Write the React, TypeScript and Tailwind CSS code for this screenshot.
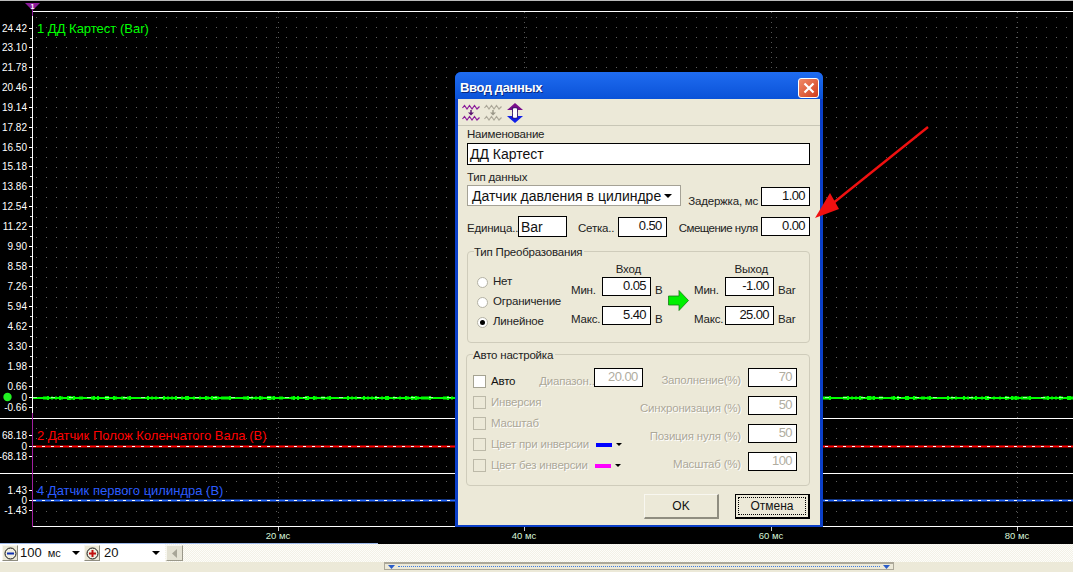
import React from "react";

const FONT = "font-['Liberation_Sans',Arial,sans-serif]";

const axis: [string, number][] = [
  ["24.42", 28], ["23.10", 47], ["21.78", 67], ["20.46", 87], ["19.14", 107], ["17.82", 127], ["16.50", 147],
  ["15.18", 166], ["13.86", 186], ["12.54", 206], ["11.22", 226], ["9.90", 246], ["8.58", 266], ["7.26", 286],
  ["5.94", 306], ["4.62", 326], ["3.30", 346], ["1.98", 366], ["0.66", 386], ["0", 397], ["-0.66", 407],
  ["68.18", 435], ["0", 446], ["-68.18", 456], ["1.43", 490], ["0", 500], ["-1.43", 510],
];

const dotRows: number[] = [
  ...Array.from({ length: 40 }, (_, i) => 17 + i * 10),
  428, 438, 456, 466, 481, 491, 511, 521,
];

function noise() {
  let d = "";
  let s = 7;
  for (let x = 33; x < 1073; x += 2) {
    s = (s * 73 + 41) % 101;
    const h = s % 5 === 0 ? 4 : s % 3 === 0 ? 3 : 2;
    d += `M${x} ${398 - h / 2}h2v${h}h-2z`;
  }
  return d;
}

function Chart() {
  return (
    <svg width="1073" height="544" className="block" fontFamily="Liberation Sans, Arial, sans-serif">
      <rect width="1073" height="544" fill="#000" />
      <line x1="0" y1="0.5" x2="1073" y2="0.5" stroke="#bbb" />
      {dotRows.map((y) => (
        <line key={y} x1="36" y1={y + 0.5} x2="1073" y2={y + 0.5} stroke="#5c5c5c" strokeDasharray="1 9" />
      ))}
      {[278, 524, 771, 1017].map((x) => (
        <React.Fragment key={x}>
          <line x1={x + 0.5} y1="12" x2={x + 0.5} y2="526" stroke="#555" strokeDasharray="1 4" />
          <line x1={x + 0.5} y1="526" x2={x + 0.5} y2="531" stroke="#ccc" />
          <text x={x} y="539" fill="#d8f5d8" fontSize="9.5" textAnchor="middle">
            {(x === 278 ? 20 : x === 524 ? 40 : x === 771 ? 60 : 80) + " мс"}
          </text>
        </React.Fragment>
      ))}
      <line x1="33" y1="11.5" x2="1073" y2="11.5" stroke="#fff" />
      <line x1="0" y1="418.5" x2="1073" y2="418.5" stroke="#fff" />
      <line x1="0" y1="473.5" x2="1073" y2="473.5" stroke="#fff" />
      <line x1="33" y1="526.5" x2="1073" y2="526.5" stroke="#fff" />
      <line x1="0" y1="543.5" x2="378" y2="543.5" stroke="#9db8e8" />
      <line x1="32.5" y1="15" x2="32.5" y2="413" stroke="#fff" />
      <line x1="32.5" y1="413" x2="32.5" y2="527" stroke="#a020a0" />
      {axis.map(([t, y], i) => (
        <React.Fragment key={i}>
          <text x="27" y={y + 3.5} fill="#fff" fontSize="10" textAnchor="end">{t}</text>
          <line x1="29" y1={y + 0.5} x2="32" y2={y + 0.5} stroke="#fff" />
          {i < 18 && <line x1="30" y1={y + 10.5} x2="32" y2={y + 10.5} stroke="#ddd" />}
        </React.Fragment>
      ))}
      <polygon points="25,3 40,3 33,10 32,10" fill="#8a1a9a" />
      <line x1="32.5" y1="9" x2="32.5" y2="16" stroke="#8a1a9a" />
      <text x="32.5" y="9" fill="#fff" fontSize="7" fontWeight="bold" textAnchor="middle">1</text>
      <circle cx="7.5" cy="397" r="4.2" fill="#22f022" />
      <path d={noise()} fill="#00ff00" />
      <line x1="33" y1="397.5" x2="1073" y2="397.5" stroke="#e8ffe8" strokeWidth="0.7" strokeDasharray="4 14" />
      <line x1="33" y1="446.5" x2="1073" y2="446.5" stroke="#ff0000" strokeWidth="2" />
      <line x1="33" y1="446.5" x2="1073" y2="446.5" stroke="#fff" strokeWidth="1" strokeDasharray="3 6" />
      <line x1="33" y1="500.5" x2="1073" y2="500.5" stroke="#2266ff" strokeWidth="2" />
      <line x1="33" y1="500.5" x2="1073" y2="500.5" stroke="#fff" strokeWidth="1" strokeDasharray="3 6" />
      <text x="37" y="33" fill="#00ff00" fontSize="13">1 ДД Картест (Bar)</text>
      <text x="37" y="440" fill="#ff0000" fontSize="13">2 Датчик Полож Коленчатого Вала (В)</text>
      <text x="37" y="494.5" fill="#2a5cff" fontSize="13">4 Датчик первого цилиндра (В)</text>
    </svg>
  );
}

function Field({ value, w = 49, h = 19, disabled = false, left = false, big = false }: { value: string; w?: number; h?: number; disabled?: boolean; left?: boolean; big?: boolean }) {
  return (
    <div
      style={{ width: w, height: h }}
      className={`shrink-0 bg-white border border-black flex items-center leading-none ${left ? "justify-start px-[2px]" : "justify-end px-[4px] pb-[2px]"} ${big ? "text-[14px] tracking-normal" : "text-[13px] tracking-[-0.6px]"} ${disabled ? "text-[#b0ad9f]" : "text-[#111]"}`}
    >
      {value}
    </div>
  );
}

function Dis({ children, className = "" }: { children: React.ReactNode; className?: string }) {
  return <span className={`text-[#aca899] [text-shadow:1px_1px_0_#fff] whitespace-nowrap ${className}`}>{children}</span>;
}

function Radio({ label, on = false }: { label: string; on?: boolean }) {
  return (
    <div className="flex items-center h-[20px]">
      <div className="w-[11px] h-[11px] rounded-full bg-white border border-[#b4b2a4] flex items-center justify-center">
        {on && <div className="w-[5px] h-[5px] rounded-full bg-black" />}
      </div>
      <span className="ml-[5px] whitespace-nowrap">{label}</span>
    </div>
  );
}

function Caret({ cls = "", size = 4 }: { cls?: string; size?: number }) {
  return (
    <svg width={size * 2} height={size} className={`shrink-0 ${cls}`}>
      <polygon points={`0,0 ${size * 2},0 ${size},${size}`} fill="#000" />
    </svg>
  );
}

function Check({ label, on = false, swatch }: { label: string; on?: boolean; swatch?: string }) {
  return (
    <div className="flex items-center h-[21px]">
      <div className={`w-[13px] h-[13px] shrink-0 border ${on ? "bg-white border-[#a5a392]" : "border-[#bcb9a8]"}`} />
      <span className="ml-[5px]">{on ? <span className="text-[#111]">{label}</span> : <Dis>{label}</Dis>}</span>
      {swatch && (
        <>
          <div className={`ml-[7px] w-[16px] h-[4px] shrink-0 ${swatch}`} />
          <Caret cls="ml-[4px]" size={3} />
        </>
      )}
    </div>
  );
}

function Wave({ color, accent }: { color: string; accent: string }) {
  return (
    <svg width="18" height="18" viewBox="0 0 18 18" fill="none">
      <path d="M0.5 4 L2.5 1.5 L5 5 L7.5 1.5 L10 5 L12.5 1.5 L15 5 L17.5 2.5" stroke={color} strokeWidth="1.2" />
      <path d="M0.5 15 L2.5 12.5 L5 16 L7.5 12.5 L10 16 L12.5 12.5 L15 16 L17.5 13.5" stroke={color} strokeWidth="1.2" />
      <path d="M9 6 V9" stroke={accent} strokeWidth="1.4" />
      <path d="M6 8.5 H12 L9 11.5 Z" fill={accent} />
    </svg>
  );
}

function Group({ title, className, children }: { title: string; className: string; children: React.ReactNode }) {
  return (
    <div className={`relative border border-[#cfccbb] rounded-[4px] ${className}`}>
      <span className="absolute left-[6px] top-[-8px] bg-[#ece9d8] pr-[2px] text-[#222] whitespace-nowrap">{title}</span>
      {children}
    </div>
  );
}

function RangeCol({ title, rows, unit, gapLabel }: { title: string; rows: string[]; unit: string; gapLabel: number }) {
  return (
    <div className="relative">
      <div className="h-[20px] flex items-center justify-end" style={{ paddingRight: gapLabel }}>{title}</div>
      {["Мин.", "Макс."].map((l, i) => (
        <div key={l} className={`flex items-center ${i ? "mt-[10px]" : "mt-[-3px]"}`}>
          <span className="w-[31px] whitespace-nowrap translate-y-[4px]">{l}</span>
          <Field value={rows[i]} />
          <span className="ml-[4px] w-[18px] whitespace-nowrap translate-y-[4px]">{unit}</span>
        </div>
      ))}
    </div>
  );
}

function Dialog() {
  const rightRows: [string, string][] = [["Заполнение(%)", "70"], ["Синхронизация (%)", "50"], ["Позиция нуля (%)", "50"], ["Масштаб (%)", "100"]];
  return (
    <div className={`absolute left-[455px] top-[72px] w-[368px] h-[455px] rounded-t-[6px] bg-[#0b3fc8] px-[3px] pb-[2px] flex flex-col text-[11.5px] tracking-[-0.2px] text-[#222] ${FONT}`}>
      <div className="h-[27px] shrink-0 -mx-[3px] rounded-t-[6px] bg-gradient-to-b from-[#1f6cf0] to-[#0a52d8] flex items-center justify-between pl-[5px] pr-[4px] pt-[5px]">
        <span className="text-white font-bold text-[13px] tracking-[-0.4px] [text-shadow:1px_1px_0_#0a2a80]">Ввод данных</span>
        <div className="w-[21px] h-[20px] rounded-[3px] border border-white bg-gradient-to-br from-[#f08a68] to-[#cf3a18] flex items-center justify-center">
          <svg width="12" height="12" viewBox="0 0 12 12"><path d="M1.5 1.5 L10.5 10.5 M10.5 1.5 L1.5 10.5" stroke="#fff" strokeWidth="2.2" /></svg>
        </div>
      </div>
      <div className="flex-1 bg-[#ece9d8] flex flex-col">
        <div className="h-[27px] shrink-0 border-b border-[#c8c6b6] flex items-center pl-[4px] pt-[1px]">
          <Wave color="#8a1a9a" accent="#5a1070" />
          <div className="ml-[4px]"><Wave color="#aca899" accent="#9a9788" /></div>
          <svg width="16" height="20" viewBox="0 0 16 20" className="ml-[5px]">
            <path d="M8 0 L16 7 H11 V9 H5 V7 H0 Z" fill="#7a0f8a" />
            <path d="M8 20 L16 13 H11 V11 H5 V13 H0 Z" fill="#1020e8" />
            <rect x="5.5" y="5" width="5" height="10" fill="#fff" stroke="#2a1060" strokeWidth="0.8" />
            <path d="M8 5 V15" stroke="#fff" strokeWidth="1" />
          </svg>
        </div>
        <div className="pl-[9px] pr-[10px] flex flex-col">
          <div className="h-[16px] mt-[1px] flex items-center">Наименование</div>
          <Field value="ДД Картест" w={343} h={22} left big />
          <div className="h-[13px] mt-[6px] flex items-center">Тип данных</div>
          <div className="flex items-end h-[22px]">
            <div className="w-[215px] h-[21px] bg-white border border-[#a5a296] flex items-center pl-[4px] text-[14px] tracking-normal leading-none text-[#111]">
              Датчик давления в цилиндре
              <Caret cls="ml-[3px]" />
            </div>
            <span className="ml-[7px] w-[73px] whitespace-nowrap mb-[-4px]">Задержка, мс</span>
            <Field value="1.00" />
          </div>
          <div className="flex items-center h-[21px] mt-[10px]">
            <span className="w-[51px] whitespace-nowrap mt-[5px]">Единица..</span>
            <Field value="Bar" w={49} h={21} left big />
            <span className="ml-[11px] w-[40px] whitespace-nowrap mt-[5px]">Сетка..</span>
            <Field value="0.50" h={20} />
            <span className="ml-[12px] w-[83px] whitespace-nowrap mt-[5px] tracking-[-0.5px]">Смещение нуля</span>
            <Field value="0.00" />
          </div>
          <Group title="Тип Преобразования" className="h-[92px] mt-[14px] flex pl-[9px] pt-[8px]">
            <div className="w-[94px] pt-[12px]">
              <Radio label="Нет" />
              <Radio label="Ограничение" />
              <Radio label="Линейное" on />
            </div>
            <RangeCol title="Вход" rows={["0.05", "5.40"]} unit="В" gapLabel={32} />
            <svg width="21" height="21" viewBox="0 0 21 21" className="mt-[30px] ml-[-5px] mr-[5px] shrink-0">
              <path d="M0.5 6 H11 V0.5 L20.5 10.5 L11 20.5 V15 H0.5 Z" fill="#00f000" stroke="#167a16" strokeWidth="0.8" />
            </svg>
            <RangeCol title="Выход" rows={["-1.00", "25.00"]} unit="Bar" gapLabel={28} />
          </Group>
          <Group title="Авто настройка" className="h-[132px] mt-[11px] -ml-[1px] flex pl-[6px]">
            <div className="w-[167px] shrink-0 whitespace-nowrap pt-[16px]">
              <div className="flex items-center">
                <Check label="Авто" on />
                <Dis className="ml-[24px]">Диапазон..</Dis>
                <div className="-ml-[1px] -mt-[8px]"><Field value="20.00" disabled /></div>
              </div>
              <Check label="Инверсия" />
              <Check label="Масштаб" />
              <Check label="Цвет при инверсии" swatch="bg-[#0000ff]" />
              <Check label="Цвет без инверсии" swatch="bg-[#ff00ff]" />
            </div>
            <div className="w-[157px] flex flex-col gap-[9px] shrink-0 pt-[13px]">
              {rightRows.map(([l, v]) => (
                <div key={l} className="flex items-center justify-end h-[19px]">
                  <Dis className="translate-y-[3px]">{l}</Dis>
                  <div className="ml-[7px]"><Field value={v} disabled /></div>
                </div>
              ))}
            </div>
          </Group>
          <div className="flex justify-end mt-[8px] gap-[16px] text-[12px] tracking-normal">
            <button className="w-[75px] h-[25px] bg-[#ece9d8] border border-[#f8f7f0] border-r-[#8f8d80] border-b-[#8f8d80] border-r-2 border-b-2 text-[#111]">OK</button>
            <div className="w-[75px] h-[25px] bg-[#ece9d8] border border-black border-r-2 border-b-2 p-[2px] text-[#111]">
              <div className="w-full h-full border border-dotted border-black flex items-center justify-center">Отмена</div>
            </div>
          </div>
        </div>
      </div>
    </div>
  );
}

function MiniBtn({ plus = false }: { plus?: boolean }) {
  return (
    <div className="w-[16px] h-[16px] bg-[#ece9d8] border border-[#f8f7f0] border-r-[#8f8d80] border-b-[#8f8d80] flex items-center justify-center shrink-0">
      <svg width="13" height="13" viewBox="0 0 13 13">
        <circle cx="6.5" cy="6.5" r="5.5" fill="#f0eee0" stroke="#111" strokeWidth="1" />
        <rect x="3" y="5.5" width="7" height="2" fill={plus ? "#c01010" : "#1030b0"} />
        {plus && <rect x="5.5" y="3" width="2" height="7" fill="#c01010" />}
      </svg>
    </div>
  );
}

function Toolbar() {
  return (
    <div className={`flex-1 flex flex-col bg-[#ece9d8] ${FONT}`}>
      <div className="h-[18px] flex items-center text-[#111] bg-[repeating-conic-gradient(#f3f1e6_0_25%,#fdfdfa_0_50%)] bg-[length:2px_2px]">
        <div className="h-full flex items-center bg-white pl-[2px] shrink-0">
          <MiniBtn />
          <div className="w-[66px] flex items-center text-[13px] pl-[2px]">
            100 <span className="ml-[6px] text-[11px]">мс</span>
            <Caret cls="ml-auto mr-[4px]" />
          </div>
          <MiniBtn plus />
          <div className="w-[65px] flex items-center text-[13px] pl-[4px]">
            20
            <Caret cls="ml-auto mr-[5px]" />
          </div>
        </div>
        <div className="w-[17px] h-[16px] ml-[1px] bg-[#e4e2d4] border border-[#f8f7f0] border-r-[#9a988a] border-b-[#9a988a] flex items-center justify-center">
          <svg width="6" height="9"><polygon points="5,0 5,9 0,4.5" fill="#a8a698" /></svg>
        </div>
      </div>
      <div className="h-[8px] ml-[384px] w-[510px] border border-[#aca899] border-t-2 flex items-center px-[3px]">
        <svg width="7" height="4" className="shrink-0"><polygon points="0,0 7,0 3.5,4" fill="#2a5cc8" /></svg>
        <div className="flex-1 mx-[3px] border-t border-dotted border-[#3a78e0]" />
        <svg width="7" height="4" className="shrink-0"><polygon points="0,0 7,0 3.5,4" fill="#2a5cc8" /></svg>
      </div>
    </div>
  );
}

export default function App() {
  return (
    <div className="relative w-[1073px] h-[572px] overflow-hidden flex flex-col bg-black">
      <div className="h-[544px] shrink-0"><Chart /></div>
      <Toolbar />
      <Dialog />
      <svg width="130" height="105" className="absolute left-[810px] top-[122px]" viewBox="0 0 130 105">
        <line x1="118" y1="5" x2="22" y2="82" stroke="#f01010" strokeWidth="2.4" />
        <polygon points="5,96 20,71 29,87" fill="#f01010" />
      </svg>
    </div>
  );
}
